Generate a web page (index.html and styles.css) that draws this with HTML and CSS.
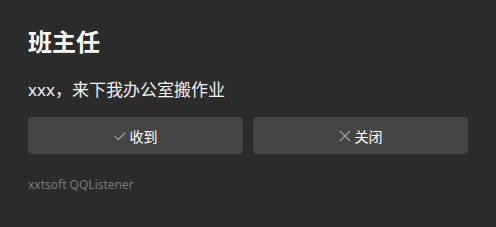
FILE: index.html
```html
<!DOCTYPE html>
<html lang="zh-CN">
<head>
<meta charset="utf-8">
<link rel="stylesheet" href="styles.css">
</head>
<body>
<div class="dialog">
  <h1 class="title">班主任</h1>
  <p class="message">xxx，来下我办公室搬作业</p>
  <div class="actions">
    <button class="btn">
      <svg class="icon" viewBox="0 0 12 12" width="12" height="12"><polyline points="0.8,6.2 4.2,9.6 11.2,2.6" fill="none" stroke="#a8a8a8" stroke-width="1.2"/></svg>
      <span>收到</span>
    </button>
    <button class="btn">
      <svg class="icon" viewBox="0 0 12 12" width="12" height="12"><path d="M0.8 0.8 L11.2 11.2 M11.2 0.8 L0.8 11.2" fill="none" stroke="#a8a8a8" stroke-width="1.2"/></svg>
      <span>关闭</span>
    </button>
  </div>
  <div class="footer">xxtsoft QQListener</div>
</div>
</body>
</html>
```
FILE: styles.css
```css
html, body {
  margin: 0;
  padding: 0;
  background: #2b2b2b;
}
body {
  font-family: "Segoe UI", "Noto Sans", "Noto Sans CJK SC", sans-serif;
  width: 496px;
  height: 227px;
  overflow: hidden;
}
.dialog {
  padding: 25px 28px 0 28px;
}
.title {
  margin: 0;
  font-family: "Noto Sans CJK SC", sans-serif;
  font-size: 24px;
  line-height: 32px;
  font-weight: 700;
  color: #ffffff;
}
.message {
  margin: 21px 0 0 0;
  font-family: "Noto Sans", "Noto Sans CJK SC", sans-serif;
  font-size: 17px;
  line-height: 24px;
  color: #f0f0f0;
}
.actions {
  margin-top: 15px;
  display: grid;
  grid-template-columns: 215px 215px;
  gap: 10px;
}
.btn {
  height: 37px;
  border: none;
  border-radius: 4px;
  background: #454545;
  color: #ffffff;
  font-family: "Noto Sans CJK SC", sans-serif;
  font-size: 14px;
  display: flex;
  align-items: center;
  justify-content: center;
  gap: 4px;
  padding: 0;
}
.icon {
  display: block;
}
.footer {
  margin-top: 23px;
  font-size: 12px;
  line-height: 16px;
  color: #787878;
}
```
